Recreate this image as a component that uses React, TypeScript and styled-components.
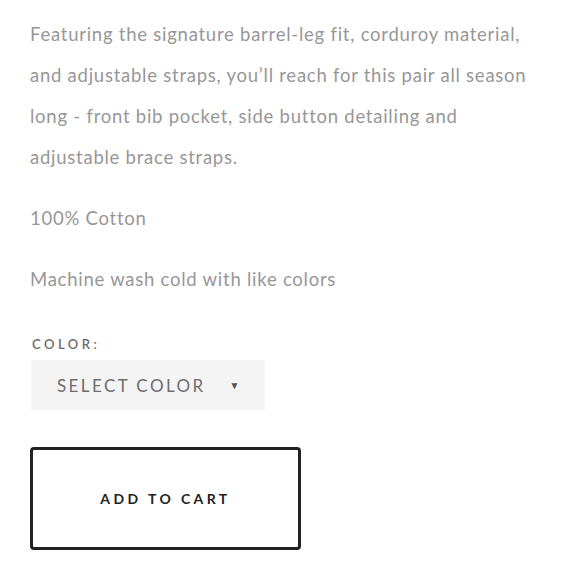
import styled, { createGlobalStyle } from "styled-components";

const GlobalStyle = createGlobalStyle`
  body {
    margin: 0;
    background: #fff;
    font-family: Lato, "Open Sans", sans-serif;
  }
`;

const Wrapper = styled.div`
  padding: 14px 30px 0 30px;
  width: 580px;
  box-sizing: border-box;
`;

const Text = styled.p`
  margin: 0 0 20px 0;
  font-size: 18.5px;
  line-height: 41px;
  color: #979797;
  letter-spacing: 0.75px;
  white-space: nowrap;
`;

const Label = styled.div`
  margin-top: 36px;
  padding-left: 2px;
  font-size: 13px;
  font-weight: 600;
  letter-spacing: 3.5px;
  color: #6a6a6a;
  line-height: 16px;
`;

const Select = styled.div`
  margin-top: 8px;
  margin-left: 1px;
  width: 234px;
  height: 50px;
  background: #f4f4f4;
  display: flex;
  align-items: center;
  padding-left: 26px;
  box-sizing: border-box;
  font-size: 17px;
  letter-spacing: 2.4px;
  color: #6e6e6e;
`;

const Arrow = styled.span`
  margin-left: 24px;
  font-size: 10px;
  color: #555;
`;

const CartButton = styled.button`
  margin-top: 37px;
  width: 271px;
  height: 103px;
  border: 3px solid #222;
  border-radius: 4px;
  background: #fff;
  font-family: Lato, sans-serif;
  font-size: 14px;
  font-weight: 700;
  letter-spacing: 3.4px;
  color: #222;
  padding: 0;
`;

export default function App() {
  return (
    <Wrapper>
      <GlobalStyle />
      <Text>
        Featuring the signature barrel-leg fit, corduroy material,
        <br />
        and adjustable straps, you’ll reach for this pair all season
        <br />
        long - front bib pocket, side button detailing and
        <br />
        adjustable brace straps.
      </Text>
      <Text>100% Cotton</Text>
      <Text>Machine wash cold with like colors</Text>
      <Label>COLOR:</Label>
      <Select>
        SELECT COLOR
        <Arrow>▼</Arrow>
      </Select>
      <CartButton>ADD TO CART</CartButton>
    </Wrapper>
  );
}
